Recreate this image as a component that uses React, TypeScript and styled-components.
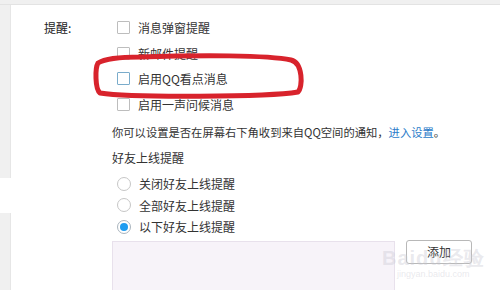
import styled, { createGlobalStyle } from "styled-components";

const GlobalStyle = createGlobalStyle`
    html, body {
        margin: 0;
        padding: 0;
        background: #ffffff;
    }
    body {
        font-family: "Noto Sans CJK SC", "Noto Sans", sans-serif;
        font-size: 12px;
        color: #333333;
    }
`;

const Page = styled.div`
    position: relative;
    width: 500px;
    height: 290px;
    overflow: hidden;
    background: #ffffff;
`;

const TopBar = styled.div`
    height: 4px;
    background: #f0f0f0;
    border-bottom: 1px solid #e3e3e3;
`;

const Body = styled.div`
    display: flex;
    height: 285px;
`;

const SideBar = styled.div`
    display: flex;
    flex-direction: column;
    gap: 35px;
    width: 11px;
    flex-shrink: 0;
`;

const SideBlock = styled.div<{ $grow?: boolean }>`
    background: #f0f0f0;
    border-right: 1px solid #e6e6e6;
    height: ${(props) => (props.$grow ? "auto" : "173px")};
    flex: ${(props) => (props.$grow ? 1 : "none")};
`;

const Main = styled.div`
    display: grid;
    grid-template-columns: 68px 1fr;
    padding: 10px 0 0 33px;
`;

const FieldLabel = styled.div`
    line-height: 25.5px;
    color: #222222;
`;

const Field = styled.div`
    display: flex;
    flex-direction: column;
`;

const OptionRow = styled.label`
    display: flex;
    align-items: center;
    gap: 8px;
    height: ${(props: { $height?: number }) => props.$height ?? 25.5}px;
    padding-left: 5px;
    white-space: nowrap;
`;

const CheckBox = styled.span<{ $hover?: boolean }>`
    box-sizing: border-box;
    width: 13px;
    height: 13px;
    border: 1px solid ${(props) => (props.$hover ? "#7aaccb" : "#bdbdbd")};
    border-radius: 1px;
    background: #ffffff;
`;

const Radio = styled.span<{ $checked?: boolean }>`
    box-sizing: border-box;
    display: flex;
    align-items: center;
    justify-content: center;
    width: 14px;
    height: 14px;
    border: 1px solid ${(props) => (props.$checked ? "#a9b4bd" : "#c6c6c6")};
    border-radius: 50%;
    background: #ffffff;
    &::after {
        content: "";
        display: ${(props) => (props.$checked ? "block" : "none")};
        width: 8px;
        height: 8px;
        border-radius: 50%;
        background: #1e9cf0;
    }
`;

const Hint = styled.p`
    margin: 0;
    font-size: 11.3px;
    line-height: 30px;
    white-space: nowrap;
`;

const Link = styled.a`
    color: #2a7bc9;
    text-decoration: none;
`;

const SubTitle = styled.div`
    line-height: 22px;
`;

const RadioGroup = styled.div`
    display: flex;
    flex-direction: column;
    margin-top: 4px;
`;

const ListRow = styled.div`
    display: flex;
    align-items: flex-start;
    gap: 11px;
    margin-top: 3px;
`;

const FriendList = styled.div`
    box-sizing: border-box;
    width: 283px;
    height: 70px;
    background: #f7f3f9;
    border: 1px solid #e8e1ec;
`;

const AddButton = styled.button`
    box-sizing: border-box;
    width: 66px;
    height: 24px;
    margin-top: -1px;
    padding: 0;
    border: 1px solid #b8b8b8;
    border-radius: 3px;
    background: #ffffff;
    color: #333333;
    font-family: inherit;
    font-size: 12px;
`;

const Mark = styled.svg`
    position: absolute;
    left: 0;
    top: 0;
    pointer-events: none;
`;

const Watermark = styled.div`
    position: absolute;
    left: 382px;
    top: 248px;
    display: flex;
    flex-direction: column;
    align-items: center;
    color: rgba(200, 200, 210, 0.4);
    font-family: "Liberation Sans", sans-serif;
    pointer-events: none;
`;

const WatermarkLogo = styled.span`
    font-size: 20px;
    font-weight: bold;
    line-height: 20px;
    letter-spacing: 1px;
`;

const WatermarkUrl = styled.span`
    font-size: 9px;
    line-height: 12px;
`;

const checks = [
    { text: "消息弹窗提醒" },
    { text: "新邮件提醒" },
    { text: "启用QQ看点消息", hover: true },
    { text: "启用一声问候消息" },
];

const radios = [
    { text: "关闭好友上线提醒" },
    { text: "全部好友上线提醒" },
    { text: "以下好友上线提醒", checked: true },
];

export default function App() {
    return (
        <Page>
            <GlobalStyle />
            <TopBar />
            <Body>
                <SideBar>
                    <SideBlock />
                    <SideBlock $grow />
                </SideBar>
                <Main>
                    <FieldLabel>提醒:</FieldLabel>
                    <Field>
                        {checks.map((item) => (
                            <OptionRow key={item.text}>
                                <CheckBox $hover={item.hover} />
                                {item.text}
                            </OptionRow>
                        ))}
                        <Hint>
                            你可以设置是否在屏幕右下角收到来自QQ空间的通知，<Link>进入设置</Link>。
                        </Hint>
                        <SubTitle>好友上线提醒</SubTitle>
                        <RadioGroup>
                            {radios.map((item) => (
                                <OptionRow key={item.text} $height={21.5}>
                                    <Radio $checked={item.checked} />
                                    {item.text}
                                </OptionRow>
                            ))}
                        </RadioGroup>
                        <ListRow>
                            <FriendList />
                            <AddButton>添加</AddButton>
                        </ListRow>
                    </Field>
                </Main>
            </Body>
            <Mark width="500" height="290" viewBox="0 0 500 290">
                <path
                    d="M140 57 C200 55 268 55 291 60 C303 63 303 87 298 92 C268 97 132 98 100 93 C95 89 95 68 98 63 C106 58 120 57 140 57 Z"
                    fill="none"
                    stroke="#d8232c"
                    strokeWidth="5"
                    strokeLinejoin="round"
                />
            </Mark>
            <Watermark>
                <WatermarkLogo>Baidu经验</WatermarkLogo>
                <WatermarkUrl>jingyan.baidu.com</WatermarkUrl>
            </Watermark>
        </Page>
    );
}
